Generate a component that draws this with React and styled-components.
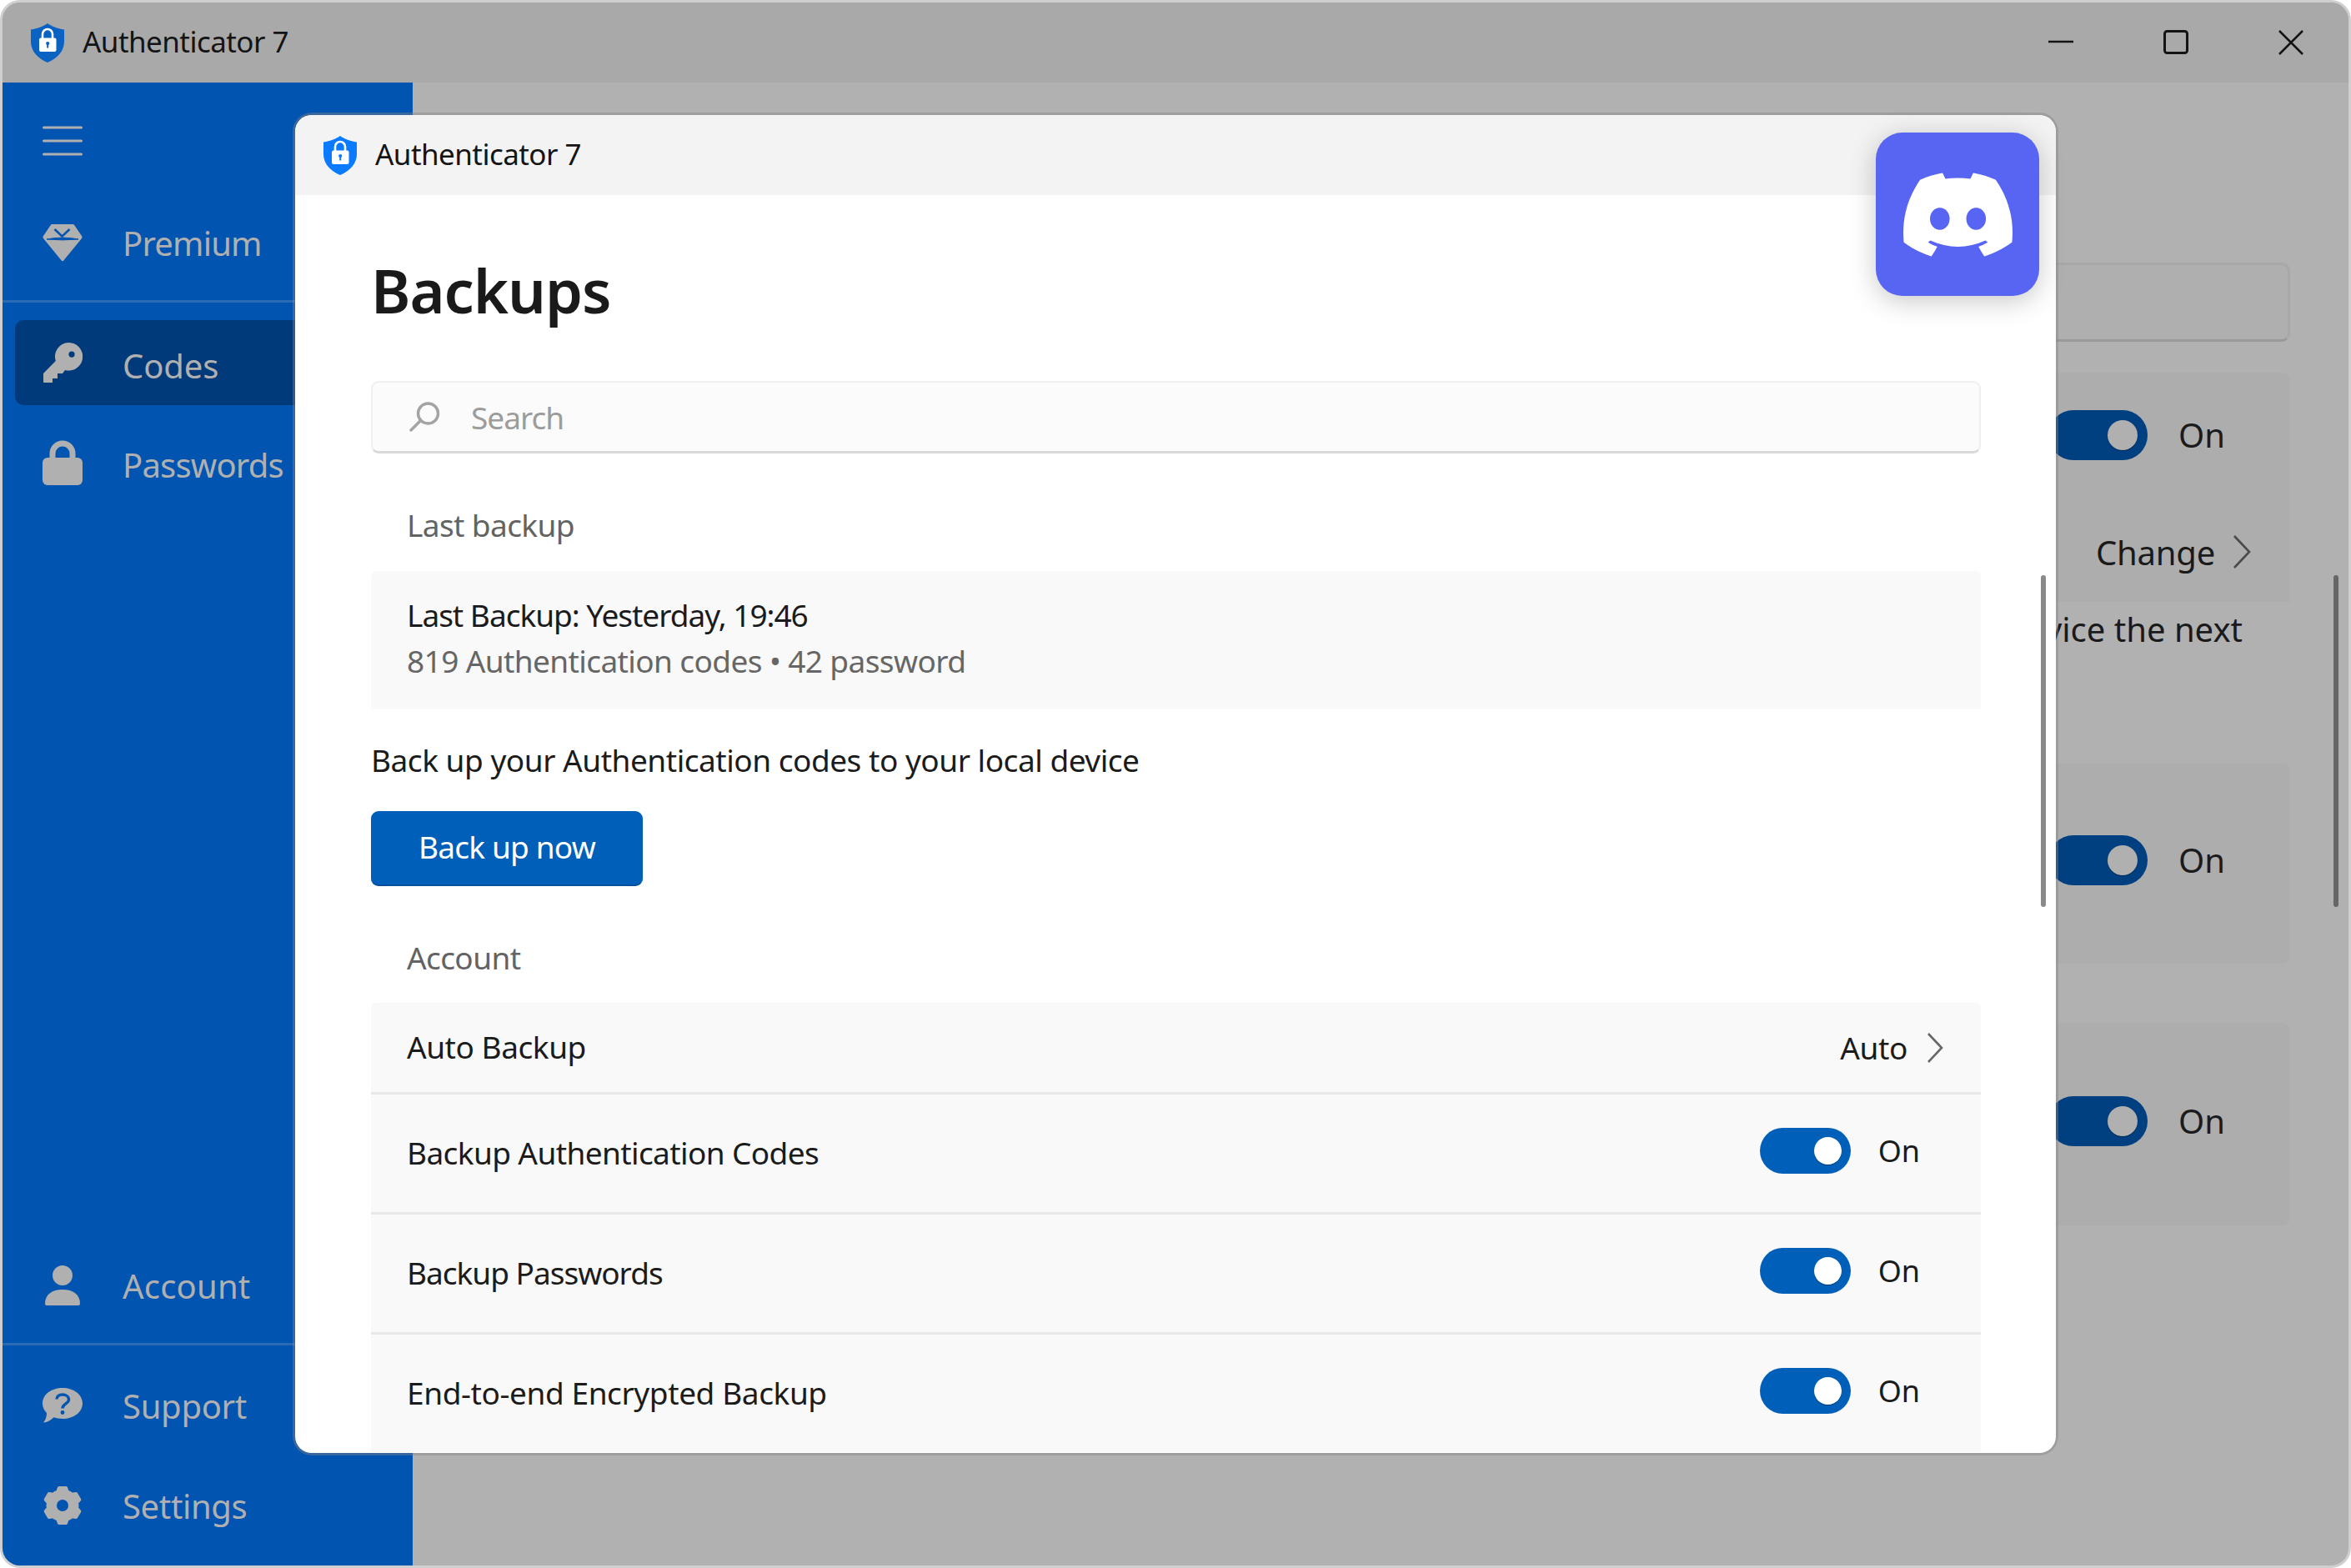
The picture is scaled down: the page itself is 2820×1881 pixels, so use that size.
import React from "react";
import styled, { createGlobalStyle } from "styled-components";
import { SiDiscord } from "react-icons/si";

const FONT = `"Noto Sans", "Open Sans", "Liberation Sans", sans-serif`;

const Global = createGlobalStyle`
  html, body { margin: 0; padding: 0; background: #ffffff; }
  body { font-family: ${FONT}; }
  * { box-sizing: border-box; }
`;

const Window = styled.div`
  position: relative;
  width: 2820px;
  height: 1881px;
  border: 3px solid #cfcfcf;
  border-radius: 24px;
  background: #b1b1b1;
  overflow: hidden;
  display: flex;
  flex-direction: column;
`;
const TitleBar = styled.header`
  flex: none;
  height: 96px;
  background: #a9a9a9;
  display: flex;
  align-items: center;
  padding-left: 34px;
`;
const AppTitle = styled.span`
  margin-left: 22px;
  padding-bottom: 3px;
  font-size: 35px;
  letter-spacing: -0.55px;
  color: #141414;
  white-space: nowrap;
`;
const Controls = styled.div`
  margin-left: auto;
  display: flex;
`;
const ControlSlot = styled.div`
  width: 138px;
  height: 96px;
  display: flex;
  align-items: center;
  justify-content: center;
`;
const Body = styled.div`
  flex: 1;
  min-height: 0;
  display: flex;
`;
const Sidebar = styled.nav`
  flex: none;
  width: 492px;
  background: #0254b1;
  display: flex;
  flex-direction: column;
  padding-bottom: 21px;
`;
const MenuRow = styled.div`
  flex: none;
  height: 141px;
  display: flex;
  align-items: center;
  padding-left: 48px;
  padding-bottom: 1px;
`;
const NavItem = styled.div`
  flex: none;
  height: 102px;
  margin: 0 15px;
  padding-left: 33px;
  border-radius: 10px;
  display: flex;
  align-items: center;
  gap: 48px;
  background: ${(p) => (p.$active ? "#003a7a" : "transparent")};
  & + & { margin-top: 18px; }
`;
const IconSlot = styled.span`
  flex: none;
  width: 48px;
  display: flex;
  justify-content: center;
  align-items: center;
`;
const NavLabel = styled.span`
  font-size: 40px;
  letter-spacing: ${(p) => p.$track}px;
  line-height: 50px;
  padding-top: ${(p) => p.$drop}px;
  color: #b0b0b0;
  white-space: nowrap;
`;
const SideDivider = styled.div`
  flex: none;
  height: 3px;
  margin: 18px 0 21px;
  background: #2c6bb3;
`;
const Spacer = styled.div`
  flex: 1;
`;
const Main = styled.main`
  position: relative;
  flex: 1;
  min-width: 0;
  padding: 216px 70px 0 40px;
  display: flex;
  flex-direction: column;
  align-items: stretch;
`;
const BackSearch = styled.div`
  flex: none;
  height: 95px;
  margin-bottom: 37px;
  border: 3px solid #a8a8a8;
  border-bottom-color: #999999;
  border-radius: 10px;
  background: #afafaf;
`;
const BackRow = styled.div`
  flex: none;
  height: ${(p) => p.$h}px;
  margin-top: ${(p) => p.$mt || 0}px;
  padding: 0 78px ${(p) => p.$pb || 0}px 0;
  border-radius: ${(p) => p.$radius || "0"};
  background: #adadad;
  display: flex;
  align-items: center;
  justify-content: flex-end;
  gap: 37px;
  & + & { border-top: ${(p) => (p.$joined ? "3px solid #a1a1a1" : "none")}; }
`;
const BackChange = styled.div`
  display: flex;
  align-items: center;
  gap: 22px;
  margin-right: -31px;
  font-size: 40px;
  letter-spacing: -0.2px;
  color: #1a1a1a;
`;
const BackNote = styled.p`
  flex: none;
  margin: 6px 57px 0 0;
  line-height: 54px;
  font-size: 40px;
  text-align: right;
  color: #1a1a1a;
  white-space: nowrap;
`;
const OnText = styled.span`
  font-size: ${(p) => (p.$big ? 40 : 36)}px;
  line-height: 1;
  color: #1b1b1b;
`;
const Toggle = styled.span`
  position: relative;
  flex: none;
  display: block;
  width: ${(p) => (p.$big ? 119 : 109)}px;
  height: ${(p) => (p.$big ? 60 : 55)}px;
  border-radius: 30px;
  background: ${(p) => (p.$big ? "#003f80" : "#0060b9")};
  &::after {
    content: "";
    position: absolute;
    top: 50%;
    right: ${(p) => (p.$big ? 12 : 11)}px;
    width: ${(p) => (p.$big ? 36 : 33)}px;
    height: ${(p) => (p.$big ? 36 : 33)}px;
    margin-top: ${(p) => (p.$big ? -18 : -17)}px;
    border-radius: 50%;
    background: ${(p) => (p.$big ? "#b0b0b0" : "#ffffff")};
    box-shadow: 0 1px 1px rgba(0, 0, 0, 0.35);
  }
`;
const ScrollThumb = styled.div`
  position: absolute;
  top: ${(p) => p.$top}px;
  right: 12px;
  width: 6px;
  height: 398px;
  border-radius: 3px;
  background: ${(p) => p.$color};
`;
const Dialog = styled.section`
  position: absolute;
  left: 351px;
  top: 135px;
  width: 2112px;
  height: 1605px;
  border-radius: 20px;
  background: #ffffff;
  box-shadow: 0 0 0 3px rgba(130, 130, 130, 0.42);
  display: flex;
  flex-direction: column;
`;
const DialogBar = styled.div`
  flex: none;
  height: 96px;
  border-radius: 20px 20px 0 0;
  background: #f3f3f3;
  display: flex;
  align-items: center;
  padding-left: 34px;
`;
const DialogBody = styled.div`
  flex: 1;
  min-height: 0;
  padding: 0 90px 0 91px;
  border-radius: 0 0 20px 20px;
  overflow: hidden;
`;
const Heading = styled.h1`
  margin: 0;
  height: 223px;
  padding-top: 64px;
  font-size: 72px;
  line-height: 100px;
  font-weight: 600;
  letter-spacing: -1px;
  color: #1a1a1a;
`;
const SearchBox = styled.div`
  height: 87px;
  display: flex;
  align-items: center;
  gap: 37px;
  padding-left: 44px;
  border: 2px solid #f0f0f0;
  border-bottom: 3px solid #d9d9d9;
  border-radius: 9px;
  background: #fbfbfb;
`;
const Placeholder = styled.span`
  font-size: 37px;
  letter-spacing: -1px;
  color: #9c9c9c;
`;
const SectionLabel = styled.div`
  height: ${(p) => p.$h}px;
  padding: 30px 0 0 43px;
  display: flex;
  align-items: center;
  font-size: 37px;
  letter-spacing: -0.6px;
  color: #636363;
`;
const InfoCard = styled.div`
  height: 166px;
  padding: 26px 43px 0;
  border-radius: 6px 6px 0 0;
  background: #f9f9f9;
`;
const InfoTitle = styled.div`
  margin-bottom: 2px;
  font-size: 37px;
  line-height: 53px;
  letter-spacing: -1px;
  color: #1b1b1b;
`;
const InfoSub = styled.div`
  font-size: 37px;
  line-height: 53px;
  letter-spacing: -0.6px;
  color: #666666;
`;
const Lead = styled.p`
  margin: 34px 0 34px;
  height: 54px;
  line-height: 54px;
  font-size: 37px;
  letter-spacing: -0.47px;
  color: #1b1b1b;
`;
const PrimaryButton = styled.button`
  display: block;
  width: 326px;
  height: 90px;
  padding: 0 0 4px;
  border: 0;
  border-bottom: 2px solid #004f9c;
  border-radius: 9px;
  background: #0060b9;
  color: #ffffff;
  font-family: ${FONT};
  font-size: 37px;
  letter-spacing: -0.8px;
`;
const Rows = styled.div`
  display: flex;
  flex-direction: column;
`;
const Row = styled.div`
  height: ${(p) => p.$h}px;
  padding: 0 40px 0 43px;
  border-top: ${(p) => (p.$first ? "0" : "3px solid #e9e9e9")};
  border-radius: ${(p) => (p.$first ? "6px 6px 0 0" : "0")};
  background: #f9f9f9;
  display: flex;
  align-items: center;
  justify-content: space-between;
`;
const RowLabel = styled.span`
  font-size: 37px;
  letter-spacing: ${(p) => p.$track}px;
  margin-top: -2px;
  color: #1b1b1b;
`;
const RowValue = styled.span`
  display: flex;
  align-items: center;
  gap: 24px;
  margin-right: 5px;
  font-size: 37px;
  letter-spacing: -0.4px;
  color: #1b1b1b;
`;
const ToggleGroup = styled.span`
  display: flex;
  align-items: center;
  gap: 33px;
  margin: -6px 33px 0 0;
`;
const DiscordTile = styled.div`
  position: absolute;
  top: 21px;
  right: 20px;
  width: 196px;
  height: 196px;
  border-radius: 32px;
  background: #5865f2;
  color: #ffffff;
  display: flex;
  align-items: center;
  justify-content: center;
  box-shadow: 0 6px 32px rgba(0, 0, 0, 0.22);
`;

const ShieldIcon = ({ color }) => (
  <svg width="40" height="47" viewBox="0 0 40 47">
    <path
      d="M20 0 C24 3 32 6.500 40 7.500 L40 22 C40 33 32 42 20 47 C8 42 0 33 0 22 L0 7.500 C8 6.500 16 3 20 0 Z"
      fill={color}
    />
    <path d="M14 18 V13 A6 6 0 0 1 26 13 V18" fill="none" stroke="#ffffff" strokeWidth="2.600" />
    <rect x="10" y="17.500" width="20.500" height="16.500" rx="2" fill="#ffffff" />
    <circle cx="20.200" cy="24" r="2.100" fill={color} />
    <rect x="19.200" y="24" width="2" height="5.500" fill={color} />
  </svg>
);

const MenuIcon = () => (
  <svg width="48" height="36" viewBox="0 0 48 36" stroke="#b0b0b0" strokeWidth="3" strokeLinecap="round">
    <path d="M1.500 2 H46.500 M1.500 18 H46.500 M1.500 34 H46.500" />
  </svg>
);

const DiamondIcon = () => (
  <svg width="48" height="47" viewBox="0 0 48 47">
    <path
      d="M11.500 1 L36.500 1 Q37.500 1 38.200 2 L47.300 15.500 Q48 16.800 47 18 L25.500 44.300 Q24 46 22.500 44.300 L1 18 Q0 16.800 0.700 15.500 L9.800 2 Q10.500 1 11.500 1 Z"
      fill="#b0b0b0"
    />
    <path d="M14.500 7 L23.500 15.500 L32.500 7" fill="none" stroke="#0254b1" strokeWidth="2.500" />
    <path d="M5 19 Q24 15.200 43 19 Q24 20.800 5 19 Z" fill="#0254b1" stroke="#0254b1" strokeWidth="1" />
  </svg>
);

const KeyIcon = () => (
  <svg width="48" height="48" viewBox="0 0 48 48">
    <path
      fillRule="evenodd"
      fill="#b0b0b0"
      d="M31 0 A16.800 16.800 0 1 1 27 33 L24 37 L18 37 L18 43 L12 43 L12 48 L2 48 Q1 48 1 47 L1 37 L15.800 22 A16.800 16.800 0 0 1 31 0 Z M35 10.500 A3.600 3.600 0 1 0 35 17.700 A3.600 3.600 0 1 0 35 10.500 Z"
    />
  </svg>
);

const LockIcon = () => (
  <svg width="48" height="54" viewBox="0 0 48 54">
    <path d="M12 26 V16 A12 12 0 0 1 36 16 V26" fill="none" stroke="#b0b0b0" strokeWidth="7" />
    <rect x="0" y="21" width="48" height="33" rx="6" fill="#b0b0b0" />
  </svg>
);

const PersonIcon = () => (
  <svg width="42" height="48" viewBox="0 0 42 48" fill="#b0b0b0">
    <ellipse cx="21" cy="12" rx="12" ry="12" />
    <path d="M0 46 C0 35 8 29 21 29 C34 29 42 35 42 46 Q42 48 40 48 L2 48 Q0 48 0 46 Z" />
  </svg>
);

const SupportIcon = () => (
  <svg width="48" height="42" viewBox="0 0 48 42">
    <path d="M24 0 C37.500 0 48 8 48 18.500 C48 29 37.500 37 24 37 C20 37 17 36.300 13.500 35.300 C10 38.800 5 41.500 1 41.500 C4 38 5 34 5 30 C1.800 27 0 23 0 18.500 C0 8 10.500 0 24 0 Z" fill="#b0b0b0" />
    <path d="M17 13.500 C17 10 20 8 24 8 C28 8 31.500 10 31.500 14 C31.500 19 24 19 24 24.500" fill="none" stroke="#0254b1" strokeWidth="3.400" />
    <circle cx="24" cy="29.500" r="2.400" fill="#0254b1" />
  </svg>
);

const gearPoints = Array.from({ length: 6 }).flatMap((_, i) => {
  const a = (-90 + i * 60) * (Math.PI / 180);
  const pt = (r, d) => {
    const t = a + (d * Math.PI) / 180;
    return `${(24 + r * Math.cos(t)).toFixed(2)},${(24 + r * Math.sin(t)).toFixed(2)}`;
  };
  return [pt(17.500, -30), pt(17.500, -19), pt(21.500, -11), pt(21.500, 11), pt(17.500, 19)];
}).join(" ");

const GearIcon = () => (
  <svg width="48" height="48" viewBox="0 0 48 48">
    <polygon points={gearPoints} fill="#b0b0b0" stroke="#b0b0b0" strokeWidth="4" strokeLinejoin="round" />
    <circle cx="24" cy="24" r="7" fill="#0254b1" />
  </svg>
);

const SearchIcon = () => (
  <svg width="37" height="36" viewBox="0 0 37 36" fill="none" stroke="#a3a3a3" strokeWidth="3.400" strokeLinecap="round">
    <circle cx="22.500" cy="14" r="12" />
    <path d="M13.500 22.500 L2 34" />
  </svg>
);

const Chevron = ({ w, h, color }) => (
  <svg width={w} height={h} viewBox={`0 0 ${w} ${h}`} fill="none" stroke={color} strokeWidth="2.600">
    <path d={`M1 1 L${w - 2} ${h / 2} L1 ${h - 1}`} />
  </svg>
);

const MinIcon = () => (
  <svg width="30" height="30" viewBox="0 0 30 30" stroke="#141414" strokeWidth="2.500">
    <path d="M0 14 H30" />
  </svg>
);
const MaxIcon = () => (
  <svg width="30" height="30" viewBox="0 0 30 30" fill="none" stroke="#141414" strokeWidth="3">
    <rect x="1.500" y="1.500" width="27" height="26" rx="3" />
  </svg>
);
const CloseIcon = () => (
  <svg width="30" height="30" viewBox="0 0 30 30" stroke="#141414" strokeWidth="2.500">
    <path d="M1 1 L29 29 M29 1 L1 29" />
  </svg>
);

const toggleRows = [
  { label: "Backup Authentication Codes", track: -0.6 },
  { label: "Backup Passwords", track: -1 },
  { label: "End-to-end Encrypted Backup", track: -0.4 },
];

const Nav = ({ icon, label, track = -0.8, drop = 2, active }) => (
  <NavItem $active={active}>
    <IconSlot>{icon}</IconSlot>
    <NavLabel $track={track} $drop={drop}>{label}</NavLabel>
  </NavItem>
);

export default function App() {
  return (
    <>
      <Global />
      <Window>
        <TitleBar>
          <ShieldIcon color="#0a62c2" />
          <AppTitle>Authenticator 7</AppTitle>
          <Controls>
            <ControlSlot><MinIcon /></ControlSlot>
            <ControlSlot><MaxIcon /></ControlSlot>
            <ControlSlot><CloseIcon /></ControlSlot>
          </Controls>
        </TitleBar>
        <Body>
          <Sidebar>
            <MenuRow><MenuIcon /></MenuRow>
            <Nav icon={<DiamondIcon />} label="Premium" />
            <SideDivider />
            <Nav active icon={<KeyIcon />} label="Codes" track={-0.1} drop={7} />
            <Nav icon={<LockIcon />} label="Passwords" drop={6} />
            <Spacer />
            <Nav icon={<PersonIcon />} label="Account" track={0.2} />
            <SideDivider />
            <Nav icon={<SupportIcon />} label="Support" track={-0.3} />
            <Nav icon={<GearIcon />} label="Settings" track={-0.35} />
          </Sidebar>
          <Main>
            <BackSearch />
            <BackRow $h={155} $pb={6} $radius="10px 10px 0 0">
              <Toggle $big />
              <OnText $big>On</OnText>
            </BackRow>
            <BackRow $h={120} $joined>
              <BackChange>
                Change
                <Chevron w={21} h={40} color="#4a4a4a" />
              </BackChange>
            </BackRow>
            <BackNote>device the next</BackNote>
            <BackRow $h={240} $mt={134} $pb={8} $radius="10px">
              <Toggle $big />
              <OnText $big>On</OnText>
            </BackRow>
            <BackRow $h={243} $mt={71} $pb={8} $radius="10px">
              <Toggle $big />
              <OnText $big>On</OnText>
            </BackRow>
            <ScrollThumb $top={591} $color="#666666" />
          </Main>
        </Body>
        <Dialog>
          <DialogBar>
            <ShieldIcon color="#0a7bff" />
            <AppTitle>Authenticator 7</AppTitle>
          </DialogBar>
          <DialogBody>
            <Heading>Backups</Heading>
            <SearchBox>
              <SearchIcon />
              <Placeholder>Search</Placeholder>
            </SearchBox>
            <SectionLabel $h={141}>Last backup</SectionLabel>
            <InfoCard>
              <InfoTitle>Last Backup: Yesterday, 19:46</InfoTitle>
              <InfoSub>819 Authentication codes • 42 password</InfoSub>
            </InfoCard>
            <Lead>Back up your Authentication codes to your local device</Lead>
            <PrimaryButton>Back up now</PrimaryButton>
            <SectionLabel $h={140}>Account</SectionLabel>
            <Rows>
              <Row $first $h={107}>
                <RowLabel $track={-0.45}>Auto Backup</RowLabel>
                <RowValue>
                  Auto
                  <Chevron w={19} h={36} color="#666666" />
                </RowValue>
              </Row>
              {toggleRows.map((row) => (
                <Row key={row.label} $h={144}>
                  <RowLabel $track={row.track}>{row.label}</RowLabel>
                  <ToggleGroup>
                    <Toggle />
                    <OnText>On</OnText>
                  </ToggleGroup>
                </Row>
              ))}
            </Rows>
          </DialogBody>
          <ScrollThumb $top={552} $color="#8a8a8a" />
          <DiscordTile>
            <SiDiscord size={131} />
          </DiscordTile>
        </Dialog>
      </Window>
    </>
  );
}
